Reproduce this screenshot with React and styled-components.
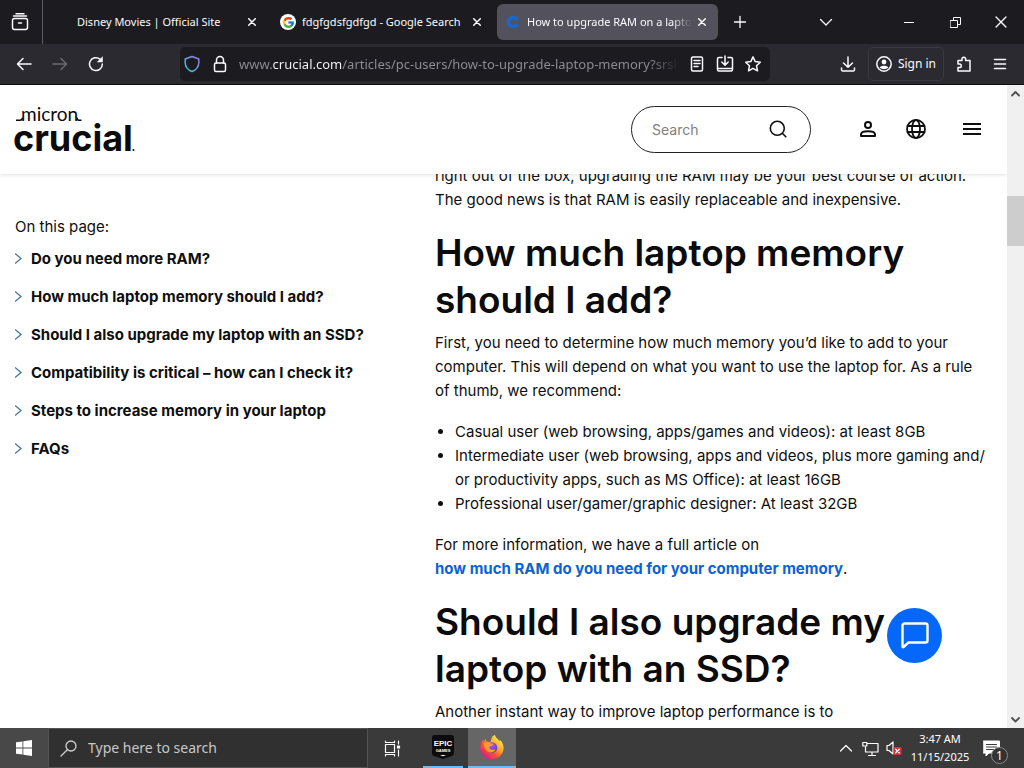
import React from 'react';
import styled, { createGlobalStyle, css } from 'styled-components';
import { FcGoogle } from 'react-icons/fc';

const uiFont = "'Noto Sans', 'Open Sans', sans-serif";
const pageFont = "Inter, 'Liberation Sans', sans-serif";

const GlobalStyle = createGlobalStyle`
  * {
    box-sizing: border-box;
  }

  body {
    margin: 0;
    background: #fff;
  }

  button,
  input {
    margin: 0;
    padding: 0;
    border: 0;
    background: none;
    color: inherit;
    font: inherit;
    outline: none;
  }

  svg {
    display: block;
    flex: none;
  }
`;

const Desktop = styled.div`
  display: flex;
  flex-direction: column;
  height: 100vh;
  overflow: hidden;
`;

/* Icons */

const Icon = ({ size = 16, box = 16, width = 1.5, children }) => (
  <svg
    width={size}
    height={size}
    viewBox={`0 0 ${box} ${box}`}
    fill="none"
    stroke="currentColor"
    strokeWidth={width}
    strokeLinecap="round"
    strokeLinejoin="round"
    aria-hidden="true"
  >
    {children}
  </svg>
);

const CloseIcon = ({ size = 8, width = 1.5 }) => (
  <Icon size={size} box={8} width={width}>
    <path d="M.7.7l6.6 6.6M7.3.7L.7 7.3" />
  </Icon>
);

const FirefoxIcon = () => (
  <svg width="26" height="26" viewBox="0 0 26 26" aria-hidden="true">
    <defs>
      <linearGradient id="fox-body" x1="0.85" y1="0.1" x2="0.15" y2="0.9">
        <stop offset="0" stopColor="#fff04f" />
        <stop offset="0.35" stopColor="#ffa92c" />
        <stop offset="0.65" stopColor="#ff5036" />
        <stop offset="1" stopColor="#e2158a" />
      </linearGradient>
      <radialGradient id="fox-globe" cx="0.5" cy="0.3" r="0.7">
        <stop offset="0" stopColor="#a65cff" />
        <stop offset="1" stopColor="#5339b5" />
      </radialGradient>
    </defs>
    <path
      fill="url(#fox-body)"
      d="M16 1c.3 2 1.6 3 3 4.300l1.800 2.200.1-1.800c3 3 4.100 6.300 3.600 9.600C23.700 21 19 25 13 25S1.500 20.500 1.300 14.300C1.200 11 2.200 8 4.200 5.800L4.600 8l2-3.200.9 2.700c1.400-.2 2.400.1 3.500.8 1.500-2 .8-2.800 2.100-5.200C13.800 2 15 1.200 16 1z"
    />
    <circle cx="13" cy="13.500" r="5.300" fill="url(#fox-globe)" />
    <path
      fill="#ff9a2e"
      d="M4.500 9.500c2-1.800 5-1.700 7.200-.2l2.800.7c-.5 1.300-2 1.900-3.500 2.200-.8.700-.8 2.600 1.100 3.400 1.800.8 3.200-.6 4.300.2-1.200 2.600-5 3.800-7.800 1.800C6.200 15.800 4.700 12.700 4.500 9.500z"
    />
  </svg>
);

const EpicIcon = () => (
  <svg width="22" height="24" viewBox="0 0 22 24" aria-hidden="true">
    <path
      d="M2.500 0h17A2.500 2.500 0 0122 2.500V18c0 1.600-.7 2.500-2.200 3.100L11 24l-8.800-2.900C.7 20.500 0 19.600 0 18V2.500A2.500 2.500 0 012.500 0z"
      fill="#0c0c0e"
    />
    <text
      x="11"
      y="11"
      textAnchor="middle"
      fill="#fff"
      fontFamily="'Liberation Sans Narrow', 'Liberation Sans', sans-serif"
      fontSize="8"
      fontWeight="700"
    >
      EPIC
    </text>
    <text
      x="11"
      y="17"
      textAnchor="middle"
      fill="#fff"
      fontFamily="'Liberation Sans', sans-serif"
      fontSize="4"
      fontWeight="700"
    >
      GAMES
    </text>
    <path d="M8 20h6l-3 1.300z" fill="#fff" />
  </svg>
);

/* Browser chrome */

const TabStrip = styled.div`
  display: flex;
  align-items: stretch;
  flex: none;
  height: 44px;
  background: #1c1b20;
  color: #fbfbfe;
  font: 11px/20px ${uiFont};
`;

const IconButton = styled.button`
  display: flex;
  align-items: center;
  justify-content: center;
  flex: none;
  width: ${({ $width }) => $width || 32}px;
  color: ${({ $dim }) => ($dim ? '#6b6a72' : 'inherit')};
`;

const FirefoxView = styled(IconButton)`
  width: 43px;
  margin-right: 4px;
  padding-right: 2px;
  border-right: 1px solid #5b5a62;
`;

const Tabs = styled.div`
  display: flex;
  flex: 0 1 671px;
  gap: 4px;
  min-width: 0;
  padding: 4px 0;
`;

const Tab = styled.div`
  display: flex;
  align-items: center;
  flex: 1 1 0;
  gap: 6px;
  min-width: 0;
  padding: 0 6px 0 8px;
  border-radius: 6px;
  background: ${({ $active }) => ($active ? '#53515c' : 'transparent')};
`;

const Favicon = styled.span`
  display: flex;
  align-items: center;
  justify-content: center;
  flex: none;
  width: 16px;
  height: 16px;
  border-radius: 50%;
  background: ${({ $plate }) => $plate || 'transparent'};
`;

const TabTitle = styled.span`
  flex: 1;
  min-width: 0;
  overflow: hidden;
  white-space: nowrap;
  ${({ $fade }) =>
    $fade &&
    css`
      mask-image: linear-gradient(to left, transparent, #000 20px);
    `}
`;

const TabClose = styled(IconButton)`
  width: 20px;
  margin-left: -6px;
`;

const WindowControls = styled.div`
  display: flex;
  margin-left: auto;
`;

const Toolbar = styled.div`
  display: flex;
  align-items: center;
  flex: none;
  height: 41px;
  padding: 0 8px 1px 6px;
  border-bottom: 1px solid #0c0c0d;
  background: #2b2a30;
  color: #fbfbfe;
  font: 12px/20px ${uiFont};
`;

const NavButtons = styled.div`
  display: flex;
  flex: none;
`;

const AddressBar = styled.div`
  display: flex;
  align-items: center;
  flex: 0 1 590px;
  min-width: 0;
  height: 34px;
  margin-left: 66px;
  padding: 0 3px;
  gap: 10px;
  border-radius: 5px;
  background: #1c1b20;
`;

/* The host name stands out from the rest of the address. */
const AddressInput = styled.input`
  flex: 1;
  min-width: 0;
  height: 24px;
  font-size: 13px;
  background: linear-gradient(
    to right,
    #8f8e96 33px,
    #fbfbfe 33px,
    #fbfbfe 103px,
    #8f8e96 103px,
    #8f8e96 calc(100% - 30px),
    transparent
  );
  background-clip: text;
  -webkit-text-fill-color: transparent;
`;

const AddressActions = styled.div`
  display: flex;
  flex: none;
  margin-left: -6px;
`;

const ToolbarEnd = styled.div`
  display: flex;
  align-items: center;
  gap: 4px;
  margin-left: auto;
`;

const SignIn = styled.button`
  display: flex;
  align-items: center;
  gap: 6px;
  height: 34px;
  padding: 0 7px;
  border: 1px solid #3a3943;
  border-radius: 5px;
`;

/* Web page */

const Viewport = styled.div`
  display: flex;
  flex: 1;
  min-height: 0;
  background: #fff;
  color: #0f0f0f;
  font: 15px/24px ${pageFont};
`;

const Page = styled.div`
  display: grid;
  grid-template-columns: minmax(0, 1fr);
  grid-template-rows: auto minmax(0, 1fr);
  flex: 1;
  min-width: 0;
  overflow: hidden;
`;

const SiteHeader = styled.header`
  z-index: 1;
  display: flex;
  align-items: center;
  height: 89px;
  padding: 0 11px 0 14px;
  background: #fff;
  box-shadow: 0 1px 3px rgba(0, 0, 0, 0.12);
`;

const SiteSearch = styled.form`
  display: flex;
  align-items: center;
  width: 180px;
  height: 47px;
  margin-left: auto;
  padding: 0 20px;
  border: 1px solid #222;
  border-radius: 24px;
`;

const SearchInput = styled.input`
  flex: 1;
  min-width: 0;
  font-size: 14px;

  &::placeholder {
    color: #7f7f7f;
    opacity: 1;
  }
`;

const HeaderActions = styled.nav`
  display: flex;
  gap: 16px;
  margin-left: 41px;
`;

const Columns = styled.main`
  display: grid;
  grid-template-columns: 420px minmax(0, 1fr);
  min-height: 0;
  padding: 0 14px 0 15px;
`;

const Contents = styled.nav`
  padding-top: 41px;

  p {
    margin: 0 0 8px;
  }
`;

const ContentsList = styled.ul`
  display: grid;
  gap: 14px;
  margin: 0;
  padding: 0;
  list-style: none;
`;

const ContentsLink = styled.a`
  display: flex;
  align-items: center;
  gap: 8px;
  color: #0f0f0f;
  font-weight: 700;
  text-decoration: none;

  svg {
    color: #3f74a8;
  }
`;

const Article = styled.article`
  margin-top: -10px;

  p,
  ul {
    margin: 0 0 17px;
  }

  ul {
    padding-left: 20px;
  }

  a {
    color: #0c62d2;
    font-weight: 700;
    text-decoration: none;
  }
`;

const Heading = styled.h2`
  margin: 0 0 8px;
  color: #0b0b0b;
  font-size: 37px;
  font-weight: 600;
  line-height: 47px;
`;

const ChatButton = styled.button`
  position: fixed;
  right: 82px;
  bottom: 105px;
  display: flex;
  align-items: center;
  justify-content: center;
  width: 55px;
  height: 55px;
  border-radius: 50%;
  background: #0668fb;
  color: #fff;
`;

const Scrollbar = styled.div`
  display: flex;
  flex-direction: column;
  flex: none;
  width: 17px;
  background: #f0f0f0;
  color: #505050;
`;

const ScrollArrow = styled.button`
  display: flex;
  align-items: center;
  justify-content: center;
  height: 17px;
`;

const Track = styled.div`
  display: grid;
  grid-template-rows: 94fr 50px 465fr;
  flex: 1;
`;

const Thumb = styled.div`
  grid-row: 2;
  background: #cdcdcd;
`;

/* Taskbar */

const Taskbar = styled.footer`
  display: flex;
  flex: none;
  height: 40px;
  background: #3a3a3a;
  color: #fff;
  font: 12px/18px ${uiFont};
`;

const TaskButton = styled.button`
  display: flex;
  align-items: center;
  justify-content: center;
  width: 48px;
  background: ${({ $fill }) => $fill || 'transparent'};
`;

const RunningApps = styled.div`
  display: flex;
  gap: 5px;
  margin-left: 7px;
`;

const AppButton = styled(TaskButton)`
  width: ${({ $active }) => ($active ? 48 : 40)}px;
  border-bottom: 2px solid #76b9ed;
  background: ${({ $active }) => ($active ? '#666' : 'transparent')};
`;

const TaskSearch = styled.label`
  display: flex;
  align-items: center;
  flex: 0 1 320px;
  gap: 11px;
  min-width: 0;
  padding: 0 11px;
  border: 1px solid #525252;
  background: #303030;
  color: #d0d0d0;

  input {
    flex: 1;
    min-width: 0;
    font-size: 14px;
  }

  input::placeholder {
    color: #c8c8c8;
    opacity: 1;
  }
`;

const Tray = styled.div`
  display: flex;
  align-items: stretch;
  margin-left: auto;
  padding-right: 8px;
`;

const Clock = styled.div`
  width: 68px;
  padding-top: 2px;
  text-align: center;
  font-size: 11px;
`;

const Notifications = styled(TaskButton)`
  position: relative;
  width: 42px;
  padding-right: 8px;
`;

const Badge = styled.span`
  position: absolute;
  right: 8px;
  bottom: 4px;
  width: 17px;
  height: 17px;
  border: 1px solid #8a8a8a;
  border-radius: 50%;
  background: #333;
  font-size: 12px;
  line-height: 15px;
  text-align: center;
`;

const CrucialLogo = () => (
  <svg width="122" height="52" viewBox="0 0 122 52" role="img" aria-label="Micron Crucial">
    <g fill="#0b0b0b">
      <text x="7" y="17" fontFamily="Lato, sans-serif" fontSize="19">
        micron
      </text>
      <text x="-1" y="47" fontFamily={pageFont} fontSize="36" fontWeight="700">
        crucial
      </text>
      <circle cx="119.500" cy="46" r="1" />
    </g>
    <path
      d="M2 16.300h4q2.400 0 2.400-2.500M63 13.500q0 2.800 2 2.800h2.500"
      fill="none"
      stroke="#0b0b0b"
      strokeWidth="1.500"
    />
  </svg>
);

const contents = [
  'Do you need more RAM?',
  'How much laptop memory should I add?',
  'Should I also upgrade my laptop with an SSD?',
  'Compatibility is critical – how can I check it?',
  'Steps to increase memory in your laptop',
  'FAQs',
];

const BrowserTab = ({ title, active, fade, plate, favicon }) => (
  <Tab $active={active}>
    <Favicon $plate={plate}>{favicon}</Favicon>
    <TabTitle $fade={fade}>{title}</TabTitle>
    <TabClose $width={20} aria-label="Close tab">
      <CloseIcon />
    </TabClose>
  </Tab>
);

const BrowserTabs = () => (
  <TabStrip>
    <FirefoxView aria-label="Firefox View">
      <Icon size={18} box={18}>
        <rect x="1.500" y="5.500" width="15" height="11" rx="2" />
        <path d="M2.500 3h13M5 .8h8M7.500 10h3" />
      </Icon>
    </FirefoxView>
    <Tabs>
      <BrowserTab title="Disney Movies | Official Site" />
      <BrowserTab
        title="fdgfgdsfgdfgd - Google Search"
        plate="#fff"
        favicon={<FcGoogle size={13} />}
      />
      <BrowserTab
        title="How to upgrade RAM on a laptop"
        active
        fade
        favicon={
          <Icon size={16} width={3.5}>
            <path d="M11.500 5A4.600 4.600 0 1011.500 11" stroke="#1769d2" />
          </Icon>
        }
      />
    </Tabs>
    <IconButton $width={44} aria-label="New tab">
      <Icon size={14} box={14} width={1.3}>
        <path d="M7 1.500v11M1.500 7h11" />
      </Icon>
    </IconButton>
    <WindowControls>
      <IconButton $width={120} aria-label="List all tabs">
        <Icon size={14} box={14} width={1.3}>
          <path d="M1.500 4.500L7 10l5.500-5.500" />
        </Icon>
      </IconButton>
      <IconButton $width={46} aria-label="Minimize">
        <Icon size={10} box={10} width={1}>
          <path d="M0 5.500h10" />
        </Icon>
      </IconButton>
      <IconButton $width={46} aria-label="Restore">
        <Icon size={11} box={11} width={1}>
          <path d="M.5 3.500h7v7h-7zM3.500 3V.5h7v7H8" />
        </Icon>
      </IconButton>
      <IconButton $width={46} aria-label="Close">
        <CloseIcon size={12} width={0.9} />
      </IconButton>
    </WindowControls>
  </TabStrip>
);

const BrowserToolbar = () => (
  <Toolbar>
    <NavButtons>
      <IconButton $width={36} aria-label="Back">
        <Icon>
          <path d="M15 8H1.500M7 2.500L1.500 8 7 13.500" />
        </Icon>
      </IconButton>
      <IconButton $width={36} $dim aria-label="Forward">
        <Icon>
          <path d="M1 8h13.500M9 2.500L14.500 8 9 13.500" />
        </Icon>
      </IconButton>
      <IconButton $width={36} aria-label="Reload">
        <Icon>
          <path d="M14.300 8A6.400 6.400 0 1112 3.200" />
          <path d="M14.500 1v5h-5z" fill="currentColor" strokeWidth="0.5" />
        </Icon>
      </IconButton>
    </NavButtons>
    <AddressBar>
      <Icon size={18} box={18}>
        <defs>
          <linearGradient id="shield" x1="1" y1="0" x2="0" y2="1">
            <stop offset="0" stopColor="#9a7be0" />
            <stop offset="1" stopColor="#36c3e0" />
          </linearGradient>
        </defs>
        <path
          d="M9 1.500L15.800 4v3.500c0 4-2.600 7.400-6.800 9-4.200-1.600-6.800-5-6.800-9V4z"
          stroke="url(#shield)"
        />
      </Icon>
      <Icon size={18} box={18}>
        <rect x="3.500" y="8" width="11" height="8.500" rx="1.500" />
        <path d="M5.500 8V5a3.500 3.500 0 017 0v3" />
      </Icon>
      <AddressInput
        aria-label="Address"
        defaultValue="www.crucial.com/articles/pc-users/how-to-upgrade-laptop-memory?srsltid"
      />
      <AddressActions>
        <IconButton $width={28} aria-label="Reader view">
          <Icon>
            <rect x="2.500" y="1" width="11" height="14" rx="1.500" />
            <path d="M5 4.500h6M5 7.500h6M5 10.500h4" />
          </Icon>
        </IconButton>
        <IconButton $width={28} aria-label="Install">
          <Icon size={18} box={18}>
            <path d="M6 2.500H3A1.500 1.500 0 001.500 4v10.500A1.500 1.500 0 003 16h12a1.500 1.500 0 001.500-1.500V4A1.500 1.500 0 0015 2.500h-3M9 1v9M5.800 7L9 10.200 12.200 7M2 13.500h14" />
          </Icon>
        </IconButton>
        <IconButton $width={28} aria-label="Bookmark">
          <Icon>
            <path d="M8 .9l2.200 4.700 5.100.6-3.800 3.500 1 5.100L8 12.300l-4.500 2.500 1-5.100L.7 6.200l5.100-.6z" />
          </Icon>
        </IconButton>
      </AddressActions>
    </AddressBar>
    <ToolbarEnd>
      <IconButton aria-label="Downloads">
        <Icon>
          <path d="M8 1v10M3.500 7L8 11.300 12.500 7M1.500 12v1.500A1.500 1.500 0 003 15h10a1.500 1.500 0 001.500-1.500V12" />
        </Icon>
      </IconButton>
      <SignIn>
        <Icon>
          <circle cx="8" cy="8" r="7.200" />
          <circle cx="8" cy="6" r="2.400" fill="currentColor" stroke="none" />
          <path d="M3.700 11.500c1-2.300 7.600-2.300 8.600 0-2 2.300-6.600 2.300-8.600 0z" fill="currentColor" stroke="none" />
        </Icon>
        Sign in
      </SignIn>
      <IconButton aria-label="Extensions">
        <Icon>
          <path d="M2 6V4.500h4V3a1.800 1.800 0 013.600 0v1.500H14V15H2v-3.500h1.500a1.800 1.800 0 000-3.600H2z" />
        </Icon>
      </IconButton>
      <IconButton aria-label="Menu">
        <Icon>
          <path d="M2.500 3.500h11M2.500 8h11M2.500 12.500h11" />
        </Icon>
      </IconButton>
    </ToolbarEnd>
  </Toolbar>
);

const PageHeader = () => (
  <SiteHeader>
    <CrucialLogo />
    <SiteSearch>
      <SearchInput type="search" placeholder="Search" aria-label="Search" />
      <IconButton type="button" $width={24} aria-label="Submit search">
        <Icon size={20} box={20} width={1.6}>
          <circle cx="9.300" cy="8.300" r="7" />
          <path d="M14.300 13.300l3.500 3.500" />
        </Icon>
      </IconButton>
    </SiteSearch>
    <HeaderActions>
      <IconButton aria-label="Account">
        <Icon size={20} box={20} width={2}>
          <circle cx="10" cy="5" r="3" />
          <path d="M3 16v-1.500c0-4.400 14-4.400 14 0V16z" />
        </Icon>
      </IconButton>
      <IconButton aria-label="Region">
        <Icon size={22} box={22} width={1.8}>
          <circle cx="11" cy="10" r="9" />
          <ellipse cx="11" cy="10" rx="4" ry="9" />
          <path d="M2.500 7h17M2.500 13h17" />
        </Icon>
      </IconButton>
      <IconButton $width={48} aria-label="Site menu">
        <Icon size={20} box={20} width={2}>
          <path d="M2 4h16M2 9h16M2 14h16" strokeLinecap="square" />
        </Icon>
      </IconButton>
    </HeaderActions>
  </SiteHeader>
);

const CrucialPage = () => (
  <Page>
    <PageHeader />
    <Columns>
      <Contents>
        <p>On this page:</p>
        <ContentsList>
          {contents.map(title => (
            <li key={title}>
              <ContentsLink href="#article">
                <svg
                  width="8"
                  height="12"
                  viewBox="0 0 8 12"
                  fill="none"
                  stroke="currentColor"
                  strokeWidth="1.300"
                  aria-hidden="true"
                >
                  <path d="M0 .5L6 5.500 0 10.500" />
                </svg>
                {title}
              </ContentsLink>
            </li>
          ))}
        </ContentsList>
      </Contents>
      <Article id="article">
        <p>
          right out of the box, upgrading the RAM may be your best course of action.
          <br />
          The good news is that RAM is easily replaceable and inexpensive.
        </p>
        <Heading>
          How much laptop memory
          <br />
          should I add?
        </Heading>
        <p>
          First, you need to determine how much memory you’d like to add to your
          <br />
          computer. This will depend on what you want to use the laptop for. As a rule
          <br />
          of thumb, we recommend:
        </p>
        <ul>
          <li>Casual user (web browsing, apps/games and videos): at least 8GB</li>
          <li>
            Intermediate user (web browsing, apps and videos, plus more gaming and/
            <br />
            or productivity apps, such as MS Office): at least 16GB
          </li>
          <li>Professional user/gamer/graphic designer: At least 32GB</li>
        </ul>
        <p>
          For more information, we have a full article on
          <br />
          <a href="#ram">how much RAM do you need for your computer memory</a>.
        </p>
        <Heading>
          Should I also upgrade my
          <br />
          laptop with an SSD?
        </Heading>
        <p>Another instant way to improve laptop performance is to</p>
      </Article>
    </Columns>
    <ChatButton aria-label="Open chat">
      <Icon size={30} box={30} width={2.4}>
        <path d="M4.500 2.500h21a2 2 0 012 2v15a2 2 0 01-2 2H8.500l-5 4.500a.6.6 0 01-1-.5v-21a2 2 0 012-2z" />
      </Icon>
    </ChatButton>
  </Page>
);

const WindowsTaskbar = () => (
  <Taskbar>
    <TaskButton $fill="#484848" aria-label="Start">
      <svg width="16" height="16" viewBox="0 0 16 16" fill="#fff" aria-hidden="true">
        <path d="M0 2.300l6.500-.9v6.200H0zM7.300 1.300L16 0v7.600H7.300zM0 8.400h6.500v6.200L0 13.700zM7.300 8.400H16V16l-8.700-1.300z" />
      </svg>
    </TaskButton>
    <TaskSearch>
      <Icon size={17} box={17} width={1.3}>
        <circle cx="11" cy="6" r="5" />
        <path d="M7.300 9.700L1 16" />
      </Icon>
      <input placeholder="Type here to search" aria-label="Type here to search" />
    </TaskSearch>
    <TaskButton aria-label="Task view">
      <Icon size={17} box={17} width={1.2}>
        <path d="M1.500 4.500h9v8h-9zM1.500 1v1.500h9V1M1.500 16v-1.500h9V16M14.500 1v3M14.500 10v6" />
        <rect x="13.500" y="6" width="2" height="2" fill="currentColor" />
      </Icon>
    </TaskButton>
    <RunningApps>
      <AppButton aria-label="Epic Games">
        <EpicIcon />
      </AppButton>
      <AppButton $active aria-label="Firefox">
        <FirefoxIcon />
      </AppButton>
    </RunningApps>
    <Tray>
      <IconButton $width={24} aria-label="Hidden icons">
        <Icon size={12} box={12} width={1.2}>
          <path d="M.5 9L6 3.500 11.500 9" />
        </Icon>
      </IconButton>
      <IconButton $width={24} aria-label="Network">
        <Icon size={17} box={17} width={1.2}>
          <path d="M5 3.500h11v8.500H3.500V7M10 12v3M6.500 15.500h7M.8 2.500h4V6h-4z" />
        </Icon>
      </IconButton>
      <IconButton $width={24} aria-label="Volume muted">
        <Icon size={16} width={1.2}>
          <path d="M1 5.500h2L7 2v12L3 10.500H1z" />
          <rect x="7.500" y="7" width="8" height="8" rx="1" fill="#d13438" stroke="none" />
          <path d="M9.700 9.200l3.600 3.600M13.300 9.200l-3.600 3.600" strokeWidth="1.300" />
        </Icon>
      </IconButton>
      <Clock>
        3:47 AM
        <br />
        11/15/2025
      </Clock>
      <Notifications aria-label="Notifications">
        <Icon size={17} box={17} width={1}>
          <path d="M.5 1h16v12H6l-3 3v-3H.5z" fill="#fff" />
          <path d="M3.500 4.500h10M3.500 7h10M3.500 9.500h7" stroke="#3a3a3a" />
        </Icon>
        <Badge>1</Badge>
      </Notifications>
    </Tray>
  </Taskbar>
);

const App = () => (
  <Desktop>
    <GlobalStyle />
    <BrowserTabs />
    <BrowserToolbar />
    <Viewport>
      <CrucialPage />
      <Scrollbar>
        <ScrollArrow aria-label="Scroll up">
          <Icon size={9} box={9} width={1.8}>
            <path d="M1 6.500L4.500 3 8 6.500" />
          </Icon>
        </ScrollArrow>
        <Track>
          <Thumb />
        </Track>
        <ScrollArrow aria-label="Scroll down">
          <Icon size={9} box={9} width={1.8}>
            <path d="M1 3l3.500 3.500L8 3" />
          </Icon>
        </ScrollArrow>
      </Scrollbar>
    </Viewport>
    <WindowsTaskbar />
  </Desktop>
);

export default App;
